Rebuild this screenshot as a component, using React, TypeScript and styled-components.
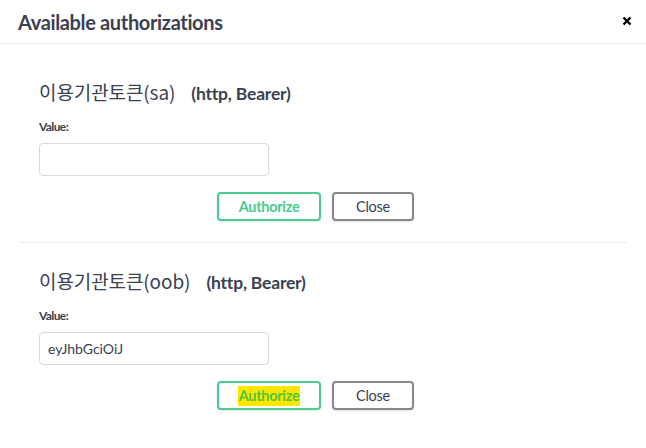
import React from "react";
import styled, { createGlobalStyle } from "styled-components";

const Global = createGlobalStyle`
  html, body { margin: 0; padding: 0; background: #fff; }
  body { font-family: Lato, "Noto Sans CJK KR", sans-serif; color: #3b4151; }
  * { box-sizing: border-box; }
`;

const Modal = styled.div`
  width: 646px;
  height: 448px;
  background: #fff;
  overflow: hidden;
`;

const Header = styled.div`
  height: 44px;
  display: flex;
  align-items: center;
  justify-content: space-between;
  padding: 0 14px 0 18px;
  border-bottom: 1px solid #ebebeb;
`;

const Title = styled.h3`
  margin: 0;
  font-family: Lato, sans-serif;
  font-weight: 700;
  font-size: 20px;
  letter-spacing: -0.35px;
  color: #3b4151;
  padding-top: 1px;
`;

const CloseX = styled.button`
  border: none;
  background: none;
  padding: 0;
  width: 10px;
  height: 10px;
  display: flex;
  cursor: pointer;
  margin-top: -1px;
`;

const Content = styled.div`
  margin: 0 19px;
  padding-top: 10px;
`;

const Section = styled.div<{ $last?: boolean }>`
  padding: 28px 0 21px 20px;
  border-bottom: ${(p) => (p.$last ? "none" : "1px solid #ebebeb")};
`;

const Heading = styled.h4`
  margin: 0;
  height: 20px;
  line-height: 20px;
  color: #3b4151;
  display: flex;
  align-items: baseline;
  white-space: nowrap;
`;

const Korean = styled.span`
  font-family: "Noto Sans CJK KR", sans-serif;
  font-weight: 400;
  font-size: 19px;
  letter-spacing: -0.1px;
`;

const Meta = styled.span`
  font-family: Lato, sans-serif;
  font-weight: 700;
  font-size: 17.5px;
  letter-spacing: -0.2px;
  margin-left: 16px;
`;

const Label = styled.label`
  display: block;
  margin-top: 18px;
  height: 13px;
  line-height: 13px;
  font-family: Lato, sans-serif;
  font-weight: 700;
  font-size: 12px;
  letter-spacing: -0.6px;
  color: #3b4151;
`;

const Input = styled.input`
  display: block;
  margin-top: 10px;
  width: 230px;
  height: 33px;
  border: 1px solid #d9d9d9;
  border-radius: 4px;
  padding: 0 8px;
  font-family: Lato, sans-serif;
  font-size: 14px;
  color: #3b4151;
  outline: none;
`;

const ButtonRow = styled.div`
  margin-top: 16px;
  display: flex;
  gap: 11px;
  padding-left: 178px;
`;

const Btn = styled.button<{ $variant: "authorize" | "close" }>`
  height: 29px;
  width: ${(p) => (p.$variant === "authorize" ? "104px" : "82px")};
  border-radius: 4px;
  background: #fff;
  border: 2px solid ${(p) => (p.$variant === "authorize" ? "#49cc90" : "#888888")};
  color: ${(p) => (p.$variant === "authorize" ? "#49cc90" : "#3b4151")};
  font-family: Lato, sans-serif;
  font-weight: ${(p) => (p.$variant === "authorize" ? 700 : 400)};
  font-size: 14.5px;
  letter-spacing: -0.3px;
  display: flex;
  align-items: center;
  justify-content: center;
  padding: 0;
  box-shadow: 0 1px 2px rgba(0, 0, 0, 0.1);
  cursor: pointer;
`;

const Highlight = styled.span`
  background: #ffe600;
  color: #4fc83a;
  padding: 1px 1px 2px;
`;

function AuthSection({
  name,
  value,
  last,
  highlight,
}: {
  name: string;
  value: string;
  last?: boolean;
  highlight?: boolean;
}) {
  return (
    <Section $last={last}>
      <Heading>
        <Korean>{name}</Korean>
        <Meta>(http, Bearer)</Meta>
      </Heading>
      <Label>Value:</Label>
      <Input type="text" defaultValue={value} />
      <ButtonRow>
        <Btn $variant="authorize">
          {highlight ? <Highlight>Authorize</Highlight> : "Authorize"}
        </Btn>
        <Btn $variant="close">Close</Btn>
      </ButtonRow>
    </Section>
  );
}

export default function App() {
  return (
    <>
      <Global />
      <Modal>
        <Header>
          <Title>Available authorizations</Title>
          <CloseX aria-label="close">
            <svg width="10" height="10" viewBox="0 0 10 10">
              <path d="M1.5 1.5 L8.5 8.5 M8.5 1.5 L1.5 8.5" stroke="#000" strokeWidth="2.4" />
            </svg>
          </CloseX>
        </Header>
        <Content>
          <AuthSection name="이용기관토큰(sa)" value="" />
          <AuthSection name="이용기관토큰(oob)" value="eyJhbGciOiJ" last highlight />
        </Content>
      </Modal>
    </>
  );
}
